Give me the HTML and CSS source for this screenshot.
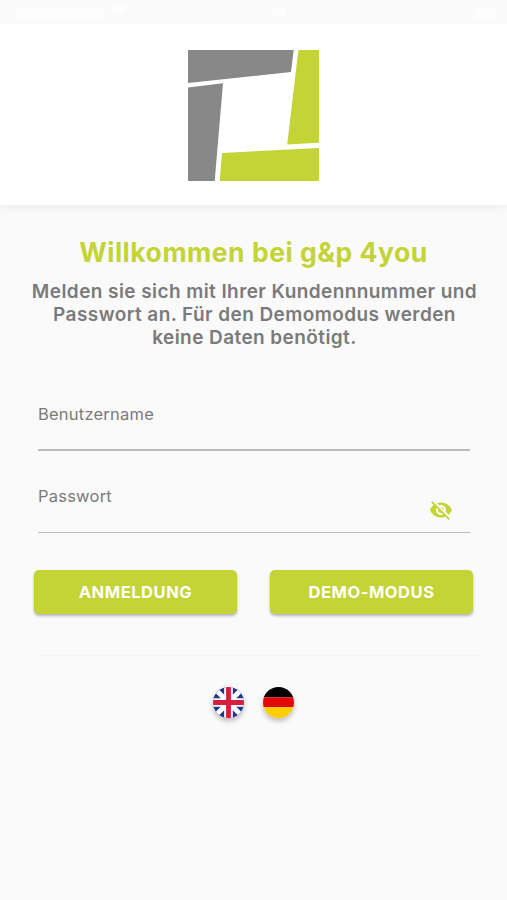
FILE: index.html
```html
<!DOCTYPE html>
<html lang="de">
<head>
<meta charset="utf-8">
<title>g&amp;p 4you</title>
<link rel="stylesheet" href="styles.css">
</head>
<body>
<div class="status"><i class="carrier"></i><i class="wifi"></i><i class="clock"></i><i class="battery"></i></div>
<header class="header">
  <svg class="logo" viewBox="0 0 131 131">
    <path fill="#888" d="M0 0H105.7L103 22L0 33ZM0 37.5L35 33.3L26.7 131H0Z"/>
    <path fill="#c4d336" d="M110.4 0H131V92.7L99.2 94.4ZM34 103L131 98V131H31.7Z"/>
  </svg>
</header>
<main class="main">
  <h1 class="title">Willkommen bei g&amp;p 4you</h1>
  <p class="intro">Melden sie sich mit Ihrer Kundennnummer und<br>Passwort an. Für den Demomodus werden<br>keine Daten benötigt.</p>
  <form class="form">
    <div class="field user"><label>Benutzername</label></div>
    <div class="field password"><label>Passwort</label>
      <svg class="eye" viewBox="0 0 24 24"><path d="M12 7c2.76 0 5 2.24 5 5 0 .65-.13 1.26-.36 1.83l2.92 2.92c1.51-1.26 2.7-2.89 3.43-4.75-1.73-4.39-6-7.5-11-7.5-1.4 0-2.74.25-3.98.7l2.16 2.16C10.74 7.13 11.35 7 12 7zM2 4.27l2.28 2.28.46.46C3.08 8.3 1.78 10.02 1 12c1.73 4.39 6 7.5 11 7.5 1.55 0 3.03-.3 4.38-.84l.42.42L19.73 22 21 20.73 3.27 3 2 4.27zM7.53 9.8l1.55 1.55c-.05.21-.08.43-.08.65 0 1.66 1.34 3 3 3 .22 0 .44-.03.65-.08l1.55 1.55c-.67.33-1.41.53-2.2.53-2.76 0-5-2.24-5-5 0-.79.2-1.53.53-2.2zm4.31-.78l3.15 3.15.02-.16c0-1.66-1.34-3-3-3l-.17.01z"/></svg>
    </div>
    <div class="actions">
      <button type="button" class="login">ANMELDUNG</button>
      <button type="button" class="demo">DEMO-MODUS</button>
    </div>
  </form>
  <hr class="divider">
  <div class="languages">
    <svg class="flag" viewBox="0 0 32 32">
      <path fill="#20368a" d="M0 0H32V32H0Z"/>
      <path stroke="#fff" stroke-width="5" d="M0 0L32 32M32 0L0 32"/>
      <path stroke="#fff" stroke-width="9" d="M16 0V32M0 16H32"/>
      <path stroke="#d51f3c" stroke-width="5" d="M16 0V32M0 16H32"/>
    </svg>
    <svg class="flag" viewBox="0 0 32 32">
      <path d="M0 0H32V10.5H0Z"/>
      <path fill="#e20808" d="M0 10.5H32V21H0Z"/>
      <path fill="#ffcd00" d="M0 21H32V32H0Z"/>
    </svg>
  </div>
</main>
</body>
</html>
```
FILE: styles.css
```css
* { box-sizing: border-box; }
body {
  margin: 0;
  min-height: 900px;
  background: #fafafa;
  color: #7a7a7a;
  font-family: Inter, "Liberation Sans", sans-serif;
}
.status {
  display: flex;
  height: 24px;
  padding: 8px 10px 0 16px;
}
.status i { background: #fff; filter: blur(1px); opacity: .6; }
.carrier { width: 87px; height: 11px; }
.wifi { width: 14px; height: 8px; margin-left: 9px; margin-top: -2px; }
.clock { width: 14px; height: 8px; margin-left: 146px; }
.battery { width: 24px; height: 10px; margin-left: auto; border-radius: 3px; }
.header {
  display: flex;
  justify-content: center;
  height: 181px;
  padding-top: 26px;
  background: #fff;
  box-shadow: 0 4px 8px -1px rgba(0, 0, 0, .05);
}
.logo { width: 131px; height: 131px; }
.main { padding: 28px 34px 0; }
.title {
  margin: 0 -20px;
  color: #c4d336;
  font-size: 26.5px;
  font-weight: 700;
  letter-spacing: .52px;
  line-height: 38px;
  text-align: center;
  white-space: nowrap;
}
.intro {
  margin: 9px -21px 0 -19px;
  font-size: 19px;
  font-weight: 600;
  letter-spacing: .42px;
  line-height: 23px;
  text-align: center;
  white-space: nowrap;
}
.form { margin-top: 53px; }
.field {
  display: flex;
  justify-content: space-between;
  height: 49px;
  margin: 0 3px 0 4px;
  border-bottom: 2px solid #bbb;
  font-size: 16.5px;
  letter-spacing: .22px;
  line-height: 24px;
}
.password { margin-top: 33px; border-bottom: 1px solid #bbb; }
.eye { width: 24px; height: 24px; margin: 14px 17px 0 0; fill: #c4d336; }
.actions {
  display: flex;
  justify-content: space-between;
  margin-top: 37.4px;
}
.actions button {
  width: 203px;
  height: 44px;
  padding: 0;
  border: 0;
  border-radius: 5px;
  background: #c4d336;
  box-shadow: 0 2px 3px rgba(0, 0, 0, .28);
  color: #fff;
  font: 700 16.5px/44px Inter, "Liberation Sans", sans-serif;
  letter-spacing: .55px;
}
.divider {
  height: 1px;
  margin: 40.6px -6px 0 6px;
  border: 0;
  background: #f5f5f5;
}
.languages {
  display: flex;
  justify-content: center;
  gap: 19px;
  margin-top: 31px;
}
.flag {
  width: 31px;
  height: 31px;
  border-radius: 50%;
  box-shadow: 0 3px 5px rgba(0, 0, 0, .25);
}
```
